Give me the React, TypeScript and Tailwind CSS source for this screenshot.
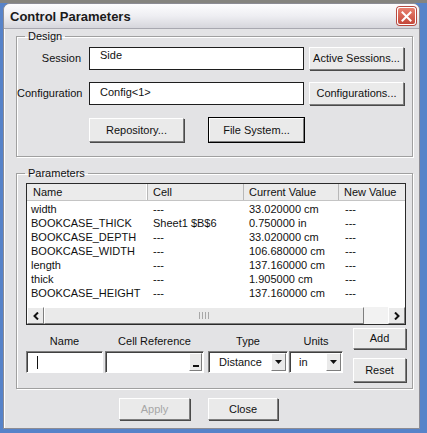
import React from 'react';

interface ParamRow {
  name: string;
  cell: string;
  current: string;
  next: string;
}

const rows: ParamRow[] = [
  { name: 'width', cell: '---', current: '33.020000 cm', next: '---' },
  { name: 'BOOKCASE_THICK', cell: 'Sheet1 $B$6', current: '0.750000 in', next: '---' },
  { name: 'BOOKCASE_DEPTH', cell: '---', current: '33.020000 cm', next: '---' },
  { name: 'BOOKCASE_WIDTH', cell: '---', current: '106.680000 cm', next: '---' },
  { name: 'length', cell: '---', current: '137.160000 cm', next: '---' },
  { name: 'thick', cell: '---', current: '1.905000 cm', next: '---' },
  { name: 'BOOKCASE_HEIGHT', cell: '---', current: '137.160000 cm', next: '---' },
];

const raised =
  'bg-[#EAEAEA] border border-t-white border-l-white border-r-[#7E7E7E] border-b-[#7E7E7E] shadow-[1px_1px_0_#4A4A4A]';

const sunken =
  'bg-white border border-t-[#7E7E7E] border-l-[#7E7E7E] border-r-white border-b-white shadow-[inset_1px_1px_0_#404040]';

const Button: React.FC<{ label: string; className?: string; disabled?: boolean; focused?: boolean }> = ({
  label,
  className = '',
  disabled = false,
  focused = false,
}) => (
  <div
    className={`flex items-center justify-center ${raised} ${
      focused ? 'outline outline-1 outline-black' : ''
    } ${disabled ? 'text-[#A6A6A6]' : 'text-[#111]'} ${className}`}
  >
    {label}
  </div>
);

const DownArrow = () => (
  <div className={`w-[15px] h-[18px] flex items-center justify-center ${raised} shadow-none`}>
    <svg width="7" height="4" viewBox="0 0 7 4">
      <polygon points="0,0 7,0 3.5,4" fill="#111" />
    </svg>
  </div>
);

const App: React.FC = () => {
  return (
    <div className="w-[427px] h-[433px] overflow-hidden bg-[linear-gradient(#85847f_0,#85847f_3px,#5783c9_3px)] font-['Liberation_Sans',Arial,sans-serif] text-[11px] leading-[13px] text-[#111]">
      <div className="ml-[3px] mt-[3px] w-[417px] h-[426px] rounded-t-[7px] border border-[#8C8C94] bg-[#E3E3E5] flex flex-col overflow-hidden">
        {/* title bar */}
        <div className="h-[25px] shrink-0 flex items-center justify-between pl-[6px] pr-[3px] bg-gradient-to-b from-[#FDFDFE] via-[#EEEEF2] to-[#D6D6DC] border-b border-[#A8A8B0]">
          <span className="font-bold text-[13px] text-[#1A1A1A]">Control Parameters</span>
          <div className="w-[19px] h-[18px] rounded-[3px] border border-white bg-gradient-to-b from-[#E8806F] to-[#C4473A] flex items-center justify-center shadow-[0_0_0_1px_#B84A40]">
            <svg width="11" height="11" viewBox="0 0 11 11">
              <path d="M1.5 1.5 L9.5 9.5 M9.5 1.5 L1.5 9.5" stroke="white" strokeWidth="2" strokeLinecap="square" />
            </svg>
          </div>
        </div>

        <div className="flex-1 pl-[11px] border-l border-white">
          {/* Design group */}
          <fieldset className="mt-[1px] w-[397px] p-0 border border-[#A0A0A0] shadow-[1px_1px_0_#fff,inset_1px_1px_0_#fff]">
            <legend className="ml-[8px] px-[3px]">Design</legend>
            <div className="pt-[4px] pb-[14px]">
              <div className="flex items-center">
                <span className="w-[64px] text-right">Session</span>
                <div className="ml-[8px] w-[215px] h-[23px] bg-white border border-[#1E1E1E] pl-[10px] pt-[1px]">Side</div>
                <Button label="Active Sessions..." className="ml-[5px] w-[95px] h-[23px]" />
              </div>
              <div className="flex items-center mt-[12px]">
                <span className="w-[64px] text-right">Configuration</span>
                <div className="ml-[8px] w-[215px] h-[23px] bg-white border border-[#1E1E1E] pl-[10px] pt-[3px]">Config&lt;1&gt;</div>
                <Button label="Configurations..." className="ml-[5px] w-[95px] h-[23px]" />
              </div>
              <div className="flex mt-[13px] pl-[72px]">
                <Button label="Repository..." className="w-[95px] h-[24px]" />
                <Button label="File System..." focused className="ml-[25px] w-[95px] h-[24px]" />
              </div>
            </div>
          </fieldset>

          {/* Parameters group */}
          <fieldset className="mt-[10px] w-[397px] p-0 border border-[#A0A0A0] shadow-[1px_1px_0_#fff,inset_1px_1px_0_#fff]">
            <legend className="ml-[8px] px-[3px]">Parameters</legend>
            <div className="pt-[3px] pl-[9px] pb-[6px]">
              {/* list view */}
              <div className="w-[380px] h-[142px] border border-[#2A2A2A] bg-white flex flex-col">
                <div className="h-[17px] shrink-0 flex bg-[#EBEBEB] border-b border-[#C4C4C4]">
                  <div className="w-[121px] pl-[6px] pt-[2px] border-r border-[#B8B8B8] shadow-[inset_-1px_0_0_#fff]">Name</div>
                  <div className="w-[96px] pl-[5px] pt-[2px] border-r border-[#B8B8B8]">Cell</div>
                  <div className="w-[95px] pl-[5px] pt-[2px] border-r border-[#B8B8B8]">Current Value</div>
                  <div className="flex-1 pl-[5px] pt-[2px]">New Value</div>
                </div>
                <div className="flex-1 pt-[1px]">
                  {rows.map((r) => (
                    <div key={r.name} className="h-[14px] flex items-center">
                      <div className="w-[121px] pl-[4px]">{r.name}</div>
                      <div className="w-[96px] pl-[5px]">{r.cell}</div>
                      <div className="w-[95px] pl-[5px]">{r.current}</div>
                      <div className="flex-1 pl-[6px]">{r.next}</div>
                    </div>
                  ))}
                </div>
                {/* horizontal scrollbar */}
                <div className="h-[17px] shrink-0 flex bg-[#F2F2F2]">
                  <div className={`w-[17px] h-[17px] flex items-center justify-center ${raised} shadow-none`}>
                    <svg width="6" height="8" viewBox="0 0 6 8">
                      <path d="M5 0.5 L1.5 4 L5 7.5" stroke="#111" strokeWidth="2" fill="none" />
                    </svg>
                  </div>
                  <div className={`w-[320px] h-[17px] flex items-center justify-center gap-[2px] ${raised} shadow-none`}>
                    <span className="w-[1px] h-[7px] bg-[#A8A8A8]" />
                    <span className="w-[1px] h-[7px] bg-[#A8A8A8]" />
                    <span className="w-[1px] h-[7px] bg-[#A8A8A8]" />
                    <span className="w-[1px] h-[7px] bg-[#A8A8A8]" />
                  </div>
                  <div className="flex-1" />
                  <div className={`w-[17px] h-[17px] flex items-center justify-center ${raised} shadow-none`}>
                    <svg width="6" height="8" viewBox="0 0 6 8">
                      <path d="M1 0.5 L4.5 4 L1 7.5" stroke="#111" strokeWidth="2" fill="none" />
                    </svg>
                  </div>
                </div>
              </div>

              {/* edit row */}
              <div className="flex">
                <div className="flex flex-col">
                  <div className="mt-[10px] flex">
                    <span className="w-[77px] text-center">Name</span>
                    <span className="ml-[2px] w-[99px] text-center">Cell Reference</span>
                    <span className="ml-[4px] w-[80px] text-center">Type</span>
                    <span className="ml-[1px] w-[54px] text-center">Units</span>
                  </div>
                  <div className="mt-[3px] flex">
                    <div className={`w-[77px] h-[22px] ${sunken} flex items-center pl-[10px]`}>
                      <span className="w-[1px] h-[13px] bg-[#111]" />
                    </div>
                    <div className={`ml-[2px] w-[99px] h-[22px] ${sunken} flex items-center justify-end pr-[1px]`}>
                      <div className={`w-[13px] h-[18px] ${raised} shadow-none flex items-end justify-center pb-[3px]`}>
                        <span className="w-[6px] h-[2px] bg-[#111]" />
                      </div>
                    </div>
                    <div className={`ml-[4px] w-[80px] h-[22px] ${sunken} flex items-center justify-between pl-[10px] pr-[1px]`}>
                      <span>Distance</span>
                      <DownArrow />
                    </div>
                    <div className={`ml-[1px] w-[54px] h-[22px] ${sunken} flex items-center justify-between pl-[9px] pr-[1px]`}>
                      <span>in</span>
                      <DownArrow />
                    </div>
                  </div>
                </div>
                <div className="ml-[10px] flex flex-col">
                  <Button label="Add" className="mt-[3px] w-[53px] h-[21px]" />
                  <Button label="Reset" className="mt-[9px] w-[53px] h-[24px]" />
                </div>
              </div>
            </div>
          </fieldset>

          {/* dialog buttons */}
          <div className="mt-[9px] flex pl-[103px]">
            <Button label="Apply" disabled className="w-[71px] h-[22px]" />
            <Button label="Close" className="ml-[18px] w-[70px] h-[22px]" />
          </div>
        </div>
      </div>
    </div>
  );
};

export default App;
